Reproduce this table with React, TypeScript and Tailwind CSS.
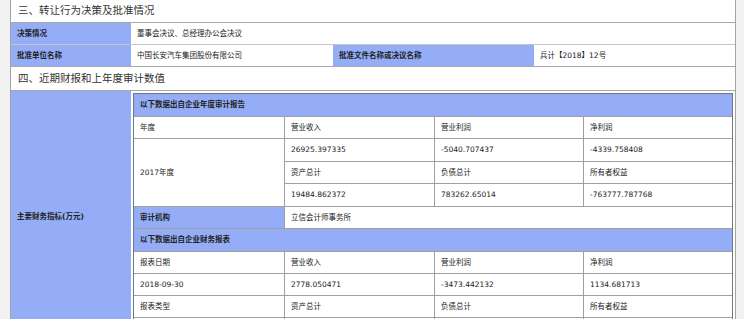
import React from 'react';

const font = { fontFamily: '"DejaVu Sans", "Noto Sans CJK SC", sans-serif' };

const blue = 'bg-[#94adf6]';

function Cell({ children, className = '' }: { children?: React.ReactNode; className?: string }) {
  return <div className={`flex items-center px-[6px] text-[7.5px] text-[#222] ${className}`}>{children}</div>;
}

export default function App() {
  return (
    <div className="min-h-screen bg-[#f1f1f1]" style={font}>
      <div className="ml-[10px] w-[726px] border-x border-[#a3a3a3] bg-white">
        {/* 三、转让行为 */}
        <div className="h-[23px] border-b border-[#a8a8a8] flex items-center pl-[7px] text-[10.5px] text-[#333]">
          三、转让行为决策及批准情况
        </div>
        <div className="grid grid-cols-[120px_202px_201px_1fr]">
          <Cell className={`${blue} h-[22px] font-bold border-b border-[#c4c4c4]`}>决策情况</Cell>
          <Cell className="col-span-3 h-[22px] border-b border-[#c4c4c4]">董事会决议、总经理办公会决议</Cell>
          <Cell className={`${blue} h-[22px] font-bold border-b border-[#a8a8a8]`}>批准单位名称</Cell>
          <Cell className="h-[22px] border-b border-[#a8a8a8]">中国长安汽车集团股份有限公司</Cell>
          <Cell className={`${blue} h-[22px] font-bold border-b border-[#a8a8a8]`}>批准文件名称或决议名称</Cell>
          <Cell className="h-[22px] border-b border-[#a8a8a8]">兵计【2018】12号</Cell>
        </div>

        {/* 四、近期财报 */}
        <div className="h-[24px] border-b border-[#a8a8a8] flex items-center pl-[7px] text-[10.5px] text-[#333]">
          四、近期财报和上年度审计数值
        </div>
        <div className="grid grid-cols-[120px_1fr]">
          <Cell className={`${blue} font-bold`}>主要财务指标(万元)</Cell>
          <div className="p-[2px]">
            <div className="border border-[#6f7786] bg-[#a0a0a0]">
              <div className="grid grid-cols-[150px_149px_148px_1fr] grid-rows-[22px_21px_22px_21px_22px_21px_22px_21px_21px_21px_22px] gap-px">
                <Cell className={`${blue} col-span-4 font-bold`}>以下数据出自企业年度审计报告</Cell>
                <Cell className="bg-white">年度</Cell>
                <Cell className="bg-white">营业收入</Cell>
                <Cell className="bg-white">营业利润</Cell>
                <Cell className="bg-white">净利润</Cell>
                <Cell className="bg-white row-span-3">2017年度</Cell>
                <Cell className="bg-white">26925.397335</Cell>
                <Cell className="bg-white">-5040.707437</Cell>
                <Cell className="bg-white">-4339.758408</Cell>
                <Cell className="bg-white">资产总计</Cell>
                <Cell className="bg-white">负债总计</Cell>
                <Cell className="bg-white">所有者权益</Cell>
                <Cell className="bg-white">19484.862372</Cell>
                <Cell className="bg-white">783262.65014</Cell>
                <Cell className="bg-white">-763777.787768</Cell>
                <Cell className={`${blue} font-bold`}>审计机构</Cell>
                <Cell className="bg-white col-span-3">立信会计师事务所</Cell>
                <Cell className={`${blue} col-span-4 font-bold`}>以下数据出自企业财务报表</Cell>
                <Cell className="bg-white">报表日期</Cell>
                <Cell className="bg-white">营业收入</Cell>
                <Cell className="bg-white">营业利润</Cell>
                <Cell className="bg-white">净利润</Cell>
                <Cell className="bg-white">2018-09-30</Cell>
                <Cell className="bg-white">2778.050471</Cell>
                <Cell className="bg-white">-3473.442132</Cell>
                <Cell className="bg-white">1134.681713</Cell>
                <Cell className="bg-white">报表类型</Cell>
                <Cell className="bg-white">资产总计</Cell>
                <Cell className="bg-white">负债总计</Cell>
                <Cell className="bg-white">所有者权益</Cell>
                <Cell className="bg-white" />
                <Cell className="bg-white" />
                <Cell className="bg-white" />
                <Cell className="bg-white" />
              </div>
            </div>
          </div>
        </div>
      </div>
    </div>
  );
}
